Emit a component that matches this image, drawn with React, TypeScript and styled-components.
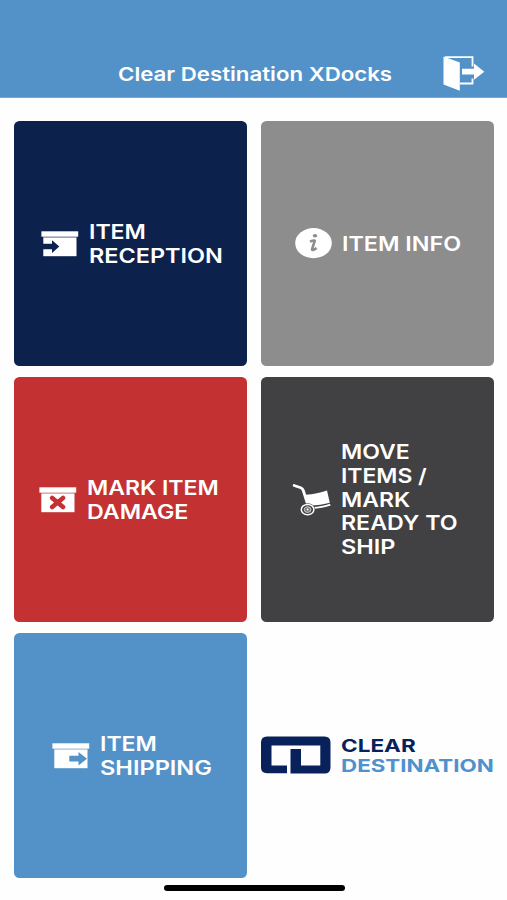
import React from "react";
import styled, { createGlobalStyle } from "styled-components";

const GlobalStyle = createGlobalStyle`
  * { box-sizing: border-box; }
  body { margin: 0; background: #fff; }
`;

const Screen = styled.div`
  width: 507px;
  height: 900px;
  display: flex;
  flex-direction: column;
  overflow: hidden;
  background: #fefefe;
  font-family: Inter, "Liberation Sans", sans-serif;
`;

const Header = styled.header`
  flex: none;
  height: 98px;
  padding: 50px 21px 0 118px;
  display: flex;
  justify-content: space-between;
  align-items: center;
  background: #5391c9;
  border-bottom: 1px solid #78a9d5;
`;

const Title = styled.h1<{ $stretch: number }>`
  margin: 0;
  padding-top: 2px;
  color: #fff;
  font-size: 18.8px;
  line-height: 24px;
  font-weight: 585;
  white-space: nowrap;
  transform: scaleX(${(p) => p.$stretch});
  transform-origin: left center;
`;

const ExitButton = styled.button`
  padding: 0;
  border: 0;
  background: none;
  width: 43px;
  height: 36px;
  svg { display: block; }
`;

const Grid = styled.main`
  flex: none;
  padding: 22.5px 13.5px 0 14px;
  display: grid;
  grid-template-columns: 233px 233px;
  grid-auto-rows: 245px;
  column-gap: 13.5px;
  row-gap: 11px;
`;

const Tile = styled.div<{ $color: string }>`
  display: flex;
  align-items: center;
  justify-content: center;
  gap: 10px;
  border-radius: 5.5px;
  background: ${(p) => p.$color};
  svg { flex: none; display: block; }
`;

const Label = styled.div<{ $width: number }>`
  flex: none;
  width: ${(p) => p.$width}px;
  padding-top: 3px;
`;

const Line = styled.span<{ $stretch: number }>`
  display: block;
  width: max-content;
  color: #fff;
  font-size: 19.9px;
  line-height: 23.8px;
  font-weight: 585;
  white-space: nowrap;
  transform: scaleX(${(p) => p.$stretch});
  transform-origin: left center;
`;

const Brand = styled.div`
  display: flex;
  align-items: center;
  gap: 10.5px;
  svg { flex: none; display: block; }
`;

const BrandName = styled.div`
  flex: none;
  width: 153px;
  padding-top: 1px;
`;

const BrandLine = styled.span<{ $color: string; $stretch: number }>`
  display: block;
  width: max-content;
  color: ${(p) => p.$color};
  font-size: 17.6px;
  line-height: 19.3px;
  font-weight: 700;
  transform: scaleX(${(p) => p.$stretch});
  transform-origin: left center;
`;

const HomeIndicator = styled.div`
  flex: none;
  width: 181px;
  height: 6px;
  margin: 7px 0 0 163.5px;
  border-radius: 3px;
  background: #000;
`;

const ExitIcon = () => (
  <svg width="43" height="36" viewBox="0 0 43 36">
    <path d="M2 1.2H29.5V10.5M29.5 22.5V27.5H17" fill="none" stroke="#fff" strokeWidth="1.8" />
    <path d="M.5 .5L16.8 6.5V34.8L.5 28.5Z" fill="#fff" />
    <path d="M19 12.8H31V7.5L41.3 15.7L31 23.8V18.5H19Z" fill="#fff" />
  </svg>
);

const BoxIcon = ({ mark, color }: { mark: "in" | "out" | "x"; color: string }) => (
  <svg width="38" height="27" viewBox="0 -1 38 27">
    <rect x=".4" y=".3" width="36.8" height="5.4" fill="#fff" />
    <rect x="2.3" y="5.7" width="33.2" height="1" fill="#fff" opacity=".45" />
    <rect x="2.3" y="6.6" width="33.2" height="18.6" fill="#fff" />
    {mark === "in" && <path d="M2 12.7H11V9.2L18.3 15.5L11 22V18.2H2Z" fill={color} />}
    {mark === "out" && <path d="M17.3 12.8H26.5V9L35 15.7L26.5 22.4V18.5H17.3Z" fill={color} />}
    {mark === "x" && (
      <path d="M13.2 11L24 20M24 11L13.2 20" stroke={color} strokeWidth="4.6" strokeLinecap="round" />
    )}
  </svg>
);

const InfoIcon = () => (
  <svg width="37" height="31" viewBox="0 0 37 31">
    <ellipse cx="18.5" cy="15.1" rx="18.3" ry="15.1" fill="#fff" />
    <ellipse cx="20" cy="7.8" rx="2.3" ry="1.8" fill="#8d8d8d" />
    <path d="M15 13.6Q18.5 12.1 19.8 12.7L17.1 21.2Q17 23.4 21.6 20" fill="none" stroke="#8d8d8d" strokeWidth="2.6" strokeLinejoin="round" />
  </svg>
);

const HandTruckIcon = () => (
  <svg width="39" height="33" viewBox="-.5 -.5 39 33">
    <path d="M1.6 2L8.3 4.2Q10.2 5 10.8 7L15.5 22" fill="none" stroke="#fff" strokeWidth="2.8" strokeLinecap="round" />
    <path d="M13.2 11.3Q25 10.6 34.5 7L37.3 19.2Q29 21.5 16.6 22.3Z" fill="#fff" />
    <path d="M19 24.6Q30 24 37.8 21.2" fill="none" stroke="#fff" strokeWidth="1.8" />
    <ellipse cx="15.1" cy="26.1" rx="7.5" ry="6.4" fill="#414042" />
    <ellipse cx="15.1" cy="26.1" rx="6.3" ry="5.2" fill="#414042" stroke="#fff" strokeWidth="1.5" />
    <ellipse cx="15.1" cy="26.1" rx="3.4" ry="2.8" fill="#777678" stroke="#d5d5d5" strokeWidth="1" />
    <circle cx="15.1" cy="26.1" r="1" fill="#fff" />
  </svg>
);

const BrandLogo = () => (
  <svg width="70" height="38" viewBox="0 0 70 38">
    <path
      fillRule="evenodd"
      fill="#08215a"
      d="M6 .5H63.5Q69.5 .5 69.5 6.5V31.5Q69.5 37.5 63.5 37.5H29.5V13H40V29.4H59.3V9.4H10.5V29.4H26V37.2H6Q0 37.2 0 31.5V6.5Q0 .5 6 .5Z"
    />
  </svg>
);

type Row = [string, number];
const TileLabel = ({ width, lines }: { width: number; lines: Row[] }) => (
  <Label $width={width}>
    {lines.map(([text, stretch]) => (
      <Line key={text} $stretch={stretch}>{text}</Line>
    ))}
  </Label>
);

export default function App() {
  return (
    <>
      <GlobalStyle />
      <Screen>
        <Header>
          <Title $stretch={1.184}>Clear Destination XDocks</Title>
          <ExitButton aria-label="Log out"><ExitIcon /></ExitButton>
        </Header>
        <Grid>
          <Tile $color="#0d214d">
            <BoxIcon mark="in" color="#0d214d" />
            <TileLabel width={131} lines={[["ITEM", 1.16], ["RECEPTION", 1.178]]} />
          </Tile>
          <Tile $color="#8d8d8d">
            <InfoIcon />
            <TileLabel width={118} lines={[["ITEM INFO", 1.172]]} />
          </Tile>
          <Tile $color="#c43133">
            <BoxIcon mark="x" color="#c43133" />
            <TileLabel width={135} lines={[["MARK ITEM", 1.157], ["DAMAGE", 1.165]]} />
          </Tile>
          <Tile $color="#414042">
            <HandTruckIcon />
            <TileLabel
              width={122}
              lines={[["MOVE", 1.157], ["ITEMS /", 1.15], ["MARK", 1.155], ["READY TO", 1.165], ["SHIP", 1.18]]}
            />
          </Tile>
          <Tile $color="#5391c9">
            <BoxIcon mark="out" color="#5391c9" />
            <TileLabel width={109} lines={[["ITEM", 1.16], ["SHIPPING", 1.185]]} />
          </Tile>
          <Brand>
            <BrandLogo />
            <BrandName>
              <BrandLine $color="#08215a" $stretch={1.28}>CLEAR</BrandLine>
              <BrandLine $color="#4d91cf" $stretch={1.27}>DESTINATION</BrandLine>
            </BrandName>
          </Brand>
        </Grid>
        <HomeIndicator />
      </Screen>
    </>
  );
}
